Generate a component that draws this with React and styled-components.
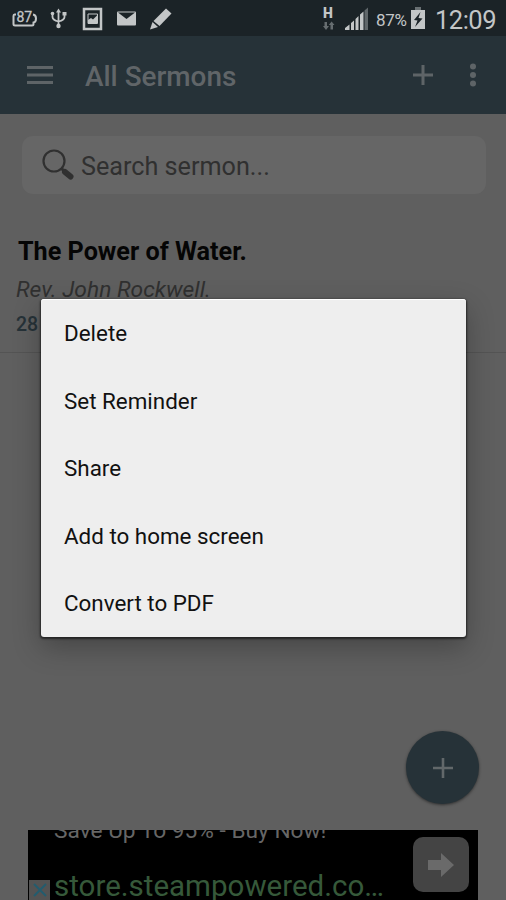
import styled, { createGlobalStyle } from "styled-components";

const GlobalStyle = createGlobalStyle`
  * {
    box-sizing: border-box;
  }

  body {
    margin: 0;
    background: #5f5f5f;
    font-family: Roboto, "Liberation Sans", sans-serif;
  }
`;

const Screen = styled.div`
  position: relative;
  display: flex;
  flex-direction: column;
  width: 506px;
  height: 900px;
  overflow: hidden;
  background: #5f5f5f;
`;

const StatusBar = styled.header`
  display: flex;
  justify-content: space-between;
  height: 36px;
  padding: 0 10px 0 12px;
  background: #1b2327;
  color: #c3c6c7;

  svg {
    display: block;
    flex: none;
  }
`;

const StatusGroup = styled.div`
  display: flex;
  align-items: center;
`;

const BatteryText = styled.span`
  margin-left: 4px;
  width: 34px;
  padding-top: 3px;
  font-size: 17px;
  letter-spacing: -0.3px;
  white-space: nowrap;
`;

const Clock = styled.span`
  margin-left: 9px;
  padding-top: 4px;
  font-size: 25.5px;
  width: 61px;
  letter-spacing: -0.5px;
  white-space: nowrap;
`;

const AppBar = styled.nav`
  display: flex;
  align-items: center;
  height: 78px;
  padding: 0 27px 0 27px;
  background: #263238;
  color: #5e6467;

  svg {
    display: block;
  }
`;

const Title = styled.h1`
  flex: 1;
  margin: 3px 0 0 32px;
  font-size: 27.9px;
  font-weight: 500;
  line-height: 32px;
  color: #606568;
`;

const SearchBox = styled.div`
  display: flex;
  align-items: center;
  height: 58px;
  margin: 22px 20px 0 22px;
  padding-left: 19px;
  border-radius: 11px;
  background: #666666;
  color: #303030;
  font-size: 25.2px;

  span {
    padding: 2px 0 0 6px;
  }
`;

const Sermon = styled.article`
  display: flex;
  flex-direction: column;
  height: 159px;
  padding: 43px 16px 0;
  border-bottom: 1px solid #545454;
`;

const SermonTitle = styled.h2`
  margin: 0 0 0 2px;
  font-size: 25.2px;
  font-weight: 700;
  line-height: 30px;
  color: #050505;
`;

const SermonAuthor = styled.span`
  margin-top: 9px;
  font-size: 22.8px;
  font-style: italic;
  line-height: 28px;
  color: #303030;
`;

const SermonDate = styled.span`
  margin-top: 9px;
  font-size: 19.5px;
  font-weight: 500;
  line-height: 24px;
  color: #263238;
`;

const Menu = styled.ul`
  position: absolute;
  top: 299px;
  left: 41px;
  width: 425px;
  height: 337.5px;
  margin: 0;
  padding: 0;
  list-style: none;
  border-radius: 3px;
  background: #eeeeee;
  box-shadow: 0 1px 2px 1px rgba(0, 0, 0, 0.55), 0 10px 28px rgba(0, 0, 0, 0.28),
    inset 0 1px 0 #ffffff;
`;

const MenuItem = styled.li`
  display: flex;
  align-items: center;
  height: 67.5px;
  padding: 1px 23px 0;
  font-size: 22.4px;
  color: #111111;
`;

const Fab = styled.button`
  position: absolute;
  top: 731px;
  left: 406px;
  display: grid;
  place-items: center;
  width: 73px;
  height: 73px;
  padding: 0;
  border: 0;
  border-radius: 50%;
  background: #263238;
  color: #62686a;
  box-shadow: 0 1px 3px rgba(0, 0, 0, 0.5);
`;

const Ad = styled.aside`
  display: flex;
  justify-content: space-between;
  width: 450px;
  height: 70px;
  margin: auto 0 0 28px;
  background: #000000;
  overflow: hidden;
`;

const AdCopy = styled.div`
  display: flex;
  flex-direction: column;
  width: 370px;
  padding-left: 26px;
  white-space: nowrap;
`;

const AdHeadline = styled.span`
  margin-top: -13px;
  font-size: 22.7px;
  line-height: 28px;
  color: #666666;
`;

const AdLink = styled.span`
  margin-top: 25px;
  font-size: 29.5px;
  line-height: 32px;
  color: #36593a;
`;

const AdArrow = styled.div`
  display: grid;
  place-items: center;
  width: 56px;
  height: 55px;
  margin: 7px 9px 0 0;
  border-radius: 10px;
  background: #444444;
`;

const AdClose = styled.div`
  position: absolute;
  left: 29px;
  bottom: 0;
  display: grid;
  place-items: center;
  width: 21px;
  height: 20px;
  background: #535353;
`;

const menuItems = [
  "Delete",
  "Set Reminder",
  "Share",
  "Add to home screen",
  "Convert to PDF",
];

const NotificationIcons = () => (
  <svg width="162" height="36" fill="none" stroke="currentColor">
    {/* battery */}
    <path d="M4 14.5H2.5Q1.500 14.500 1.500 16V24Q1.500 25.500 3 25.500H20Q21.500 25.500 21.500 24V22.500Q24 22 24 18.500Q24 15 21 14.500" strokeWidth="2" />
    <text x="4.500" y="21.500" fill="currentColor" fontSize="14" strokeWidth="0.3">87</text>
    {/* usb */}
    <path d="M46.500 11V26M40.500 13V17Q40.500 20 46.500 21.500Q52.500 20 52.500 17V14" strokeWidth="1.8" />
    <path d="M46.500 8.500L49 12.500H44Z" fill="currentColor" stroke="none" />
    <circle cx="40.500" cy="13.500" r="1.800" fill="currentColor" stroke="none" />
    <path d="M50.500 12H54.500V15.500H50.500Z" fill="currentColor" stroke="none" />
    <circle cx="46.500" cy="26" r="2.200" fill="currentColor" stroke="none" />
    {/* picture */}
    <rect x="72" y="9" width="17" height="20" strokeWidth="2.5" />
    <path d="M76 14H85.500V23.500H76Z" strokeWidth="1" />
    <path d="M76 23V20L79 18L81 19.500L85 15.500V23Z" fill="currentColor" stroke="none" />
    {/* mail */}
    <rect x="105" y="11.500" width="19" height="14" rx="1" fill="currentColor" stroke="none" />
    <path d="M106 12.500L114.500 19L123 12.500Z" fill="#1b2327" stroke="none" />
    {/* pencil */}
    <path d="M154 8.500L159.500 13.500L147.500 26L141.500 21Z" fill="currentColor" stroke="none" />
    <path d="M140.500 22L146 27L138 29.500Z" fill="currentColor" stroke="none" />
  </svg>
);

const SignalIcons = () => (
  <svg width="49" height="36" fill="currentColor">
    <text x="0" y="17.500" fontSize="14" fontWeight="900">H</text>
    <path d="M1.500 22H4V26H6L3 30L0 26H1.500ZM7.500 29.500V25H5.800L8.600 21.500L11.500 25H10V29.500Z" fill="#666d70" />
    <path d="M22 30V28L26.500 24.500V30ZM28 30V23L31 20.500V30ZM32.500 30V19L35.500 16V30ZM37 30V14.500L40.500 11.500V30Z" />
    <path d="M41.500 30V10.500L45 7.500V30Z" fill="#60676a" />
  </svg>
);

const ChargingIcon = () => (
  <svg width="16" height="36" fill="currentColor">
    <path d="M5 7H11V10H5Z" fill="#697073" />
    <path d="M1 10H15V29H1Z" />
    <path d="M10.500 12L4 20L7.500 20.500L5 27L12.500 18.500L8.500 18Z" fill="#1b2327" />
  </svg>
);

const PlusIcon = ({ size = 20, weight = 3 }) => (
  <svg width={size} height={size} viewBox="0 0 20 20" stroke="currentColor" strokeWidth={weight}>
    <path d="M10 0V20M0 10H20" />
  </svg>
);

const App = () => {
  return (
    <Screen>
      <GlobalStyle />
      <StatusBar>
        <StatusGroup>
          <NotificationIcons />
        </StatusGroup>
        <StatusGroup>
          <SignalIcons />
          <BatteryText>87%</BatteryText>
          <ChargingIcon />
          <Clock>12:09</Clock>
        </StatusGroup>
      </StatusBar>

      <AppBar>
        <svg width="26" height="20" stroke="currentColor" strokeWidth="3">
          <path d="M0 2.500H26M0 10H26M0 17.500H26" />
        </svg>
        <Title>All Sermons</Title>
        <PlusIcon />
        <svg width="46" height="24" fill="currentColor">
          <circle cx="40" cy="3.500" r="3" />
          <circle cx="40" cy="12" r="3" />
          <circle cx="40" cy="20.500" r="3" />
        </svg>
      </AppBar>

      <SearchBox>
        <svg width="34" height="34" fill="none" stroke="currentColor">
          <circle cx="13" cy="13" r="10.500" strokeWidth="2.2" />
          <path d="M20 20L24 24" strokeWidth="3" />
          <path d="M24 24L29.500 28.500" strokeWidth="6" strokeLinecap="round" />
        </svg>
        <span>Search sermon...</span>
      </SearchBox>

      <Sermon>
        <SermonTitle>The Power of Water.</SermonTitle>
        <SermonAuthor>Rev. John Rockwell.</SermonAuthor>
        <SermonDate>28</SermonDate>
      </Sermon>

      <Ad>
        <AdCopy>
          <AdHeadline>Save Up To 95% - Buy Now!</AdHeadline>
          <AdLink>store.steampowered.co…</AdLink>
        </AdCopy>
        <AdArrow>
          <svg width="28" height="24" fill="#6a6a6a">
            <path d="M1 7H14V0L27 12L14 24V17H1Z" />
          </svg>
        </AdArrow>
      </Ad>
      <AdClose>
        <svg width="14" height="14" stroke="#235c6e" strokeWidth="2">
          <path d="M1 1L13 13M13 1L1 13" />
        </svg>
      </AdClose>

      <Fab aria-label="Add sermon">
        <PlusIcon weight={2.6} />
      </Fab>

      <Menu>
        {menuItems.map((item) => (
          <MenuItem key={item}>{item}</MenuItem>
        ))}
      </Menu>
    </Screen>
  );
};

export default App;
